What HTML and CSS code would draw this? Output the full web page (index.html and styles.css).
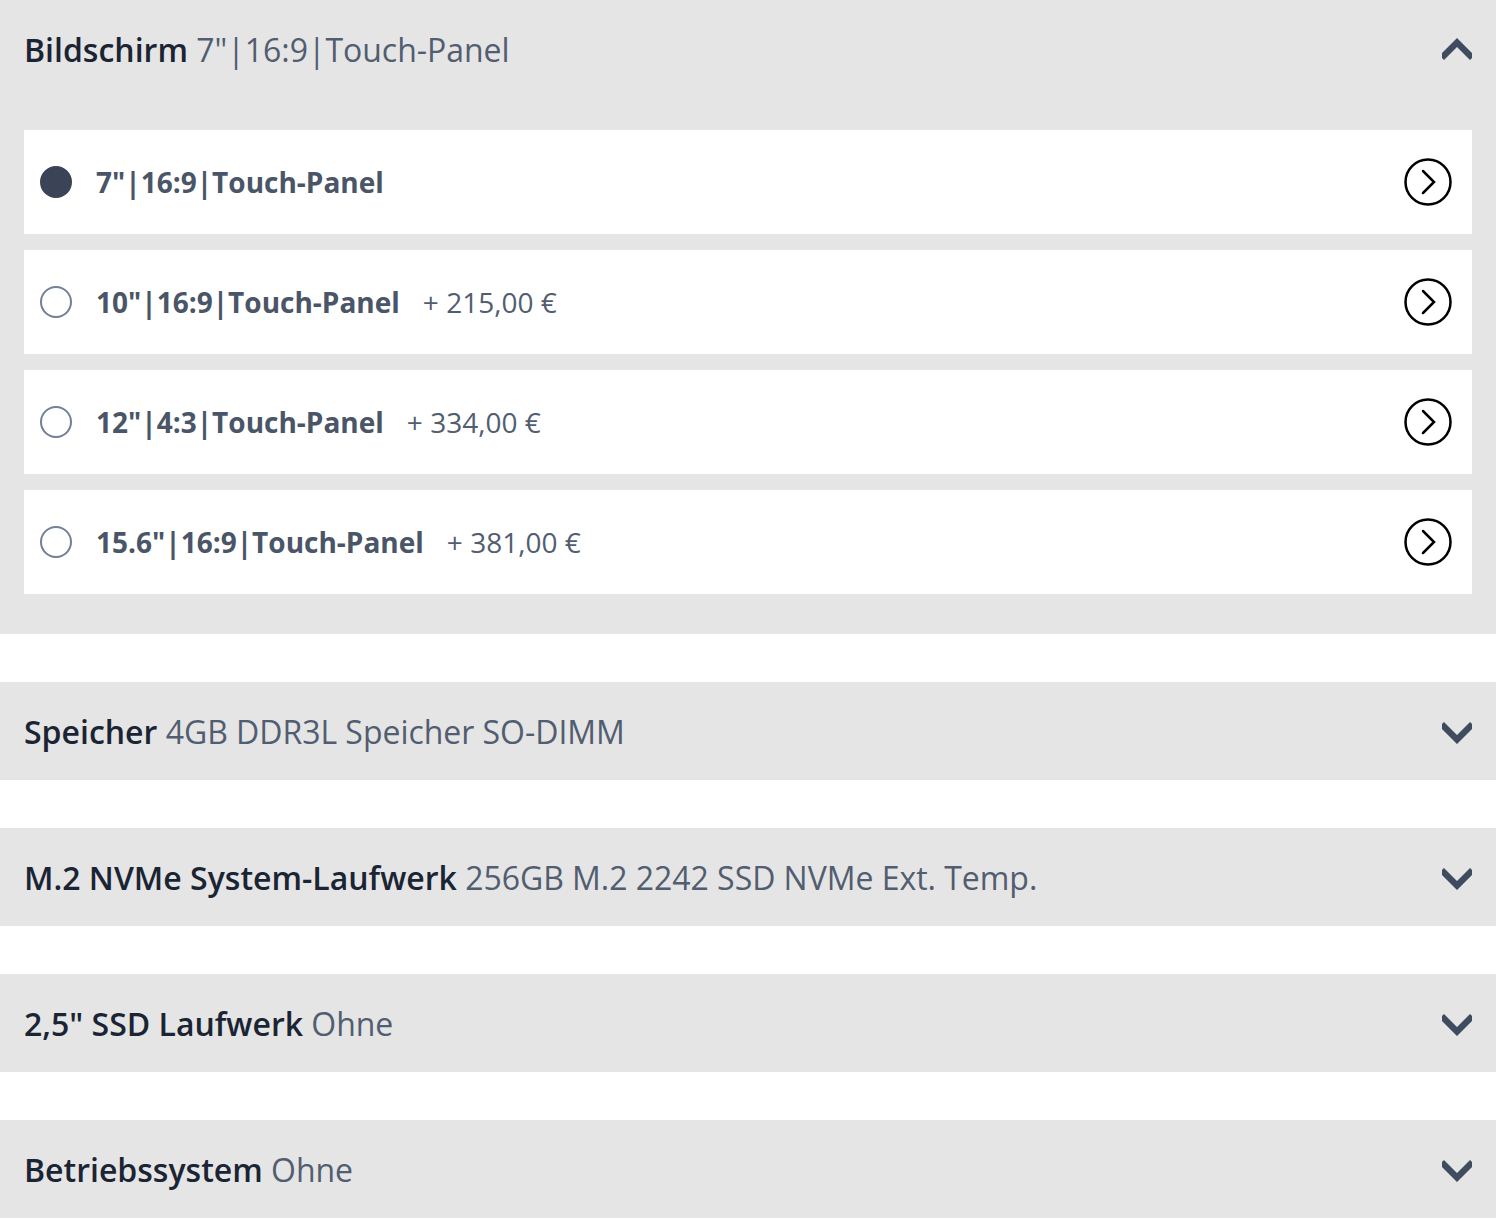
FILE: index.html
```html
<!DOCTYPE html>
<html lang="de">
<head>
  <meta charset="UTF-8">
  <title>Konfigurator</title>
  <link rel="stylesheet" href="styles.css">
</head>
<body>

  <!-- Bildschirm (open) -->
  <div class="section">
    <div class="section-header">
      <div class="section-title"><span class="section-name">Bildschirm</span> 7"|16:9|Touch-Panel</div>
      <svg class="chevron" viewBox="0 0 30 22"><path d="M2 22 15 9 28 22 30 20V15L15 0 0 15V20Z"/></svg>
    </div>
    <div class="options">
      <div class="option">
        <span class="radio selected"></span>
        <span class="option-name">7"|16:9|Touch-Panel</span>
        <svg class="info" viewBox="0 0 48 48"><circle cx="24" cy="24" r="22.5"/><path d="M19 13 30 24 19 35"/></svg>
      </div>
      <div class="option">
        <span class="radio"></span>
        <span class="option-name">10"|16:9|Touch-Panel</span>
        <span class="option-price">+ 215,00 €</span>
        <svg class="info" viewBox="0 0 48 48"><circle cx="24" cy="24" r="22.5"/><path d="M19 13 30 24 19 35"/></svg>
      </div>
      <div class="option">
        <span class="radio"></span>
        <span class="option-name">12"|4:3|Touch-Panel</span>
        <span class="option-price">+ 334,00 €</span>
        <svg class="info" viewBox="0 0 48 48"><circle cx="24" cy="24" r="22.5"/><path d="M19 13 30 24 19 35"/></svg>
      </div>
      <div class="option">
        <span class="radio"></span>
        <span class="option-name">15.6"|16:9|Touch-Panel</span>
        <span class="option-price">+ 381,00 €</span>
        <svg class="info" viewBox="0 0 48 48"><circle cx="24" cy="24" r="22.5"/><path d="M19 13 30 24 19 35"/></svg>
      </div>
    </div>
  </div>

  <!-- Closed sections -->
  <div class="section">
    <div class="section-header">
      <div class="section-title"><span class="section-name">Speicher</span> 4GB DDR3L Speicher SO-DIMM</div>
      <svg class="chevron down" viewBox="0 0 30 22"><path d="M2 0 15 13 28 0 30 2V7L15 22 0 7V2Z"/></svg>
    </div>
  </div>

  <div class="section">
    <div class="section-header">
      <div class="section-title"><span class="section-name">M.2 NVMe System-Laufwerk</span> 256GB M.2 2242 SSD NVMe Ext. Temp.</div>
      <svg class="chevron down" viewBox="0 0 30 22"><path d="M2 0 15 13 28 0 30 2V7L15 22 0 7V2Z"/></svg>
    </div>
  </div>

  <div class="section">
    <div class="section-header">
      <div class="section-title"><span class="section-name">2,5" SSD Laufwerk</span> Ohne</div>
      <svg class="chevron down" viewBox="0 0 30 22"><path d="M2 0 15 13 28 0 30 2V7L15 22 0 7V2Z"/></svg>
    </div>
  </div>

  <div class="section">
    <div class="section-header">
      <div class="section-title"><span class="section-name">Betriebssystem</span> Ohne</div>
      <svg class="chevron down" viewBox="0 0 30 22"><path d="M2 0 15 13 28 0 30 2V7L15 22 0 7V2Z"/></svg>
    </div>
  </div>

</body>
</html>
```

FILE: styles.css
```css
/* General Styles */
body {
  font-family: "Open Sans", "Noto Sans", sans-serif;
  margin: 0;
  padding: 0;
  width: 1496px;
  background-color: #fff;
  color: #4a5568;
}

/* Sections */
.section {
  background-color: #e5e5e5;
  margin-bottom: 48px;
}

.section:last-child {
  margin-bottom: 0;
}

.section-header {
  display: flex;
  align-items: center;
  justify-content: space-between;
  height: 98px;
  padding: 0 24px;
}

.section-title {
  padding-top: 2px;
  font-size: 32px;
  font-weight: 400;
  line-height: 40px;
  letter-spacing: -0.03px;
  color: #525d70;
}

.section-name {
  font-weight: 600;
  letter-spacing: 0;
  color: #1a2433;
}

.chevron {
  width: 30px;
  height: 22px;
  fill: #3f4b5f;
}

.chevron.down {
  margin-top: 4px;
}

/* Options */
.options {
  display: flex;
  flex-direction: column;
  gap: 16px;
  padding: 32px 24px 40px;
}

.option {
  display: flex;
  align-items: center;
  height: 104px;
  padding: 0 20px 0 16px;
  background-color: #fff;
}

.radio {
  flex: none;
  box-sizing: border-box;
  width: 32px;
  height: 32px;
  margin-right: 24px;
  border: 2px solid #718096;
  border-radius: 50%;
}

.radio.selected {
  background-color: #3a4456;
  border-color: #3a4456;
}

.option-name {
  font-size: 28px;
  font-weight: 700;
}

.option-price {
  margin-left: 23px;
  font-size: 28px;
  font-weight: 400;
  color: #525d70;
}

.info {
  flex: none;
  width: 48px;
  height: 48px;
  margin-left: auto;
  fill: none;
  stroke: #000;
  stroke-width: 2.500;
  stroke-linecap: round;
}
```
